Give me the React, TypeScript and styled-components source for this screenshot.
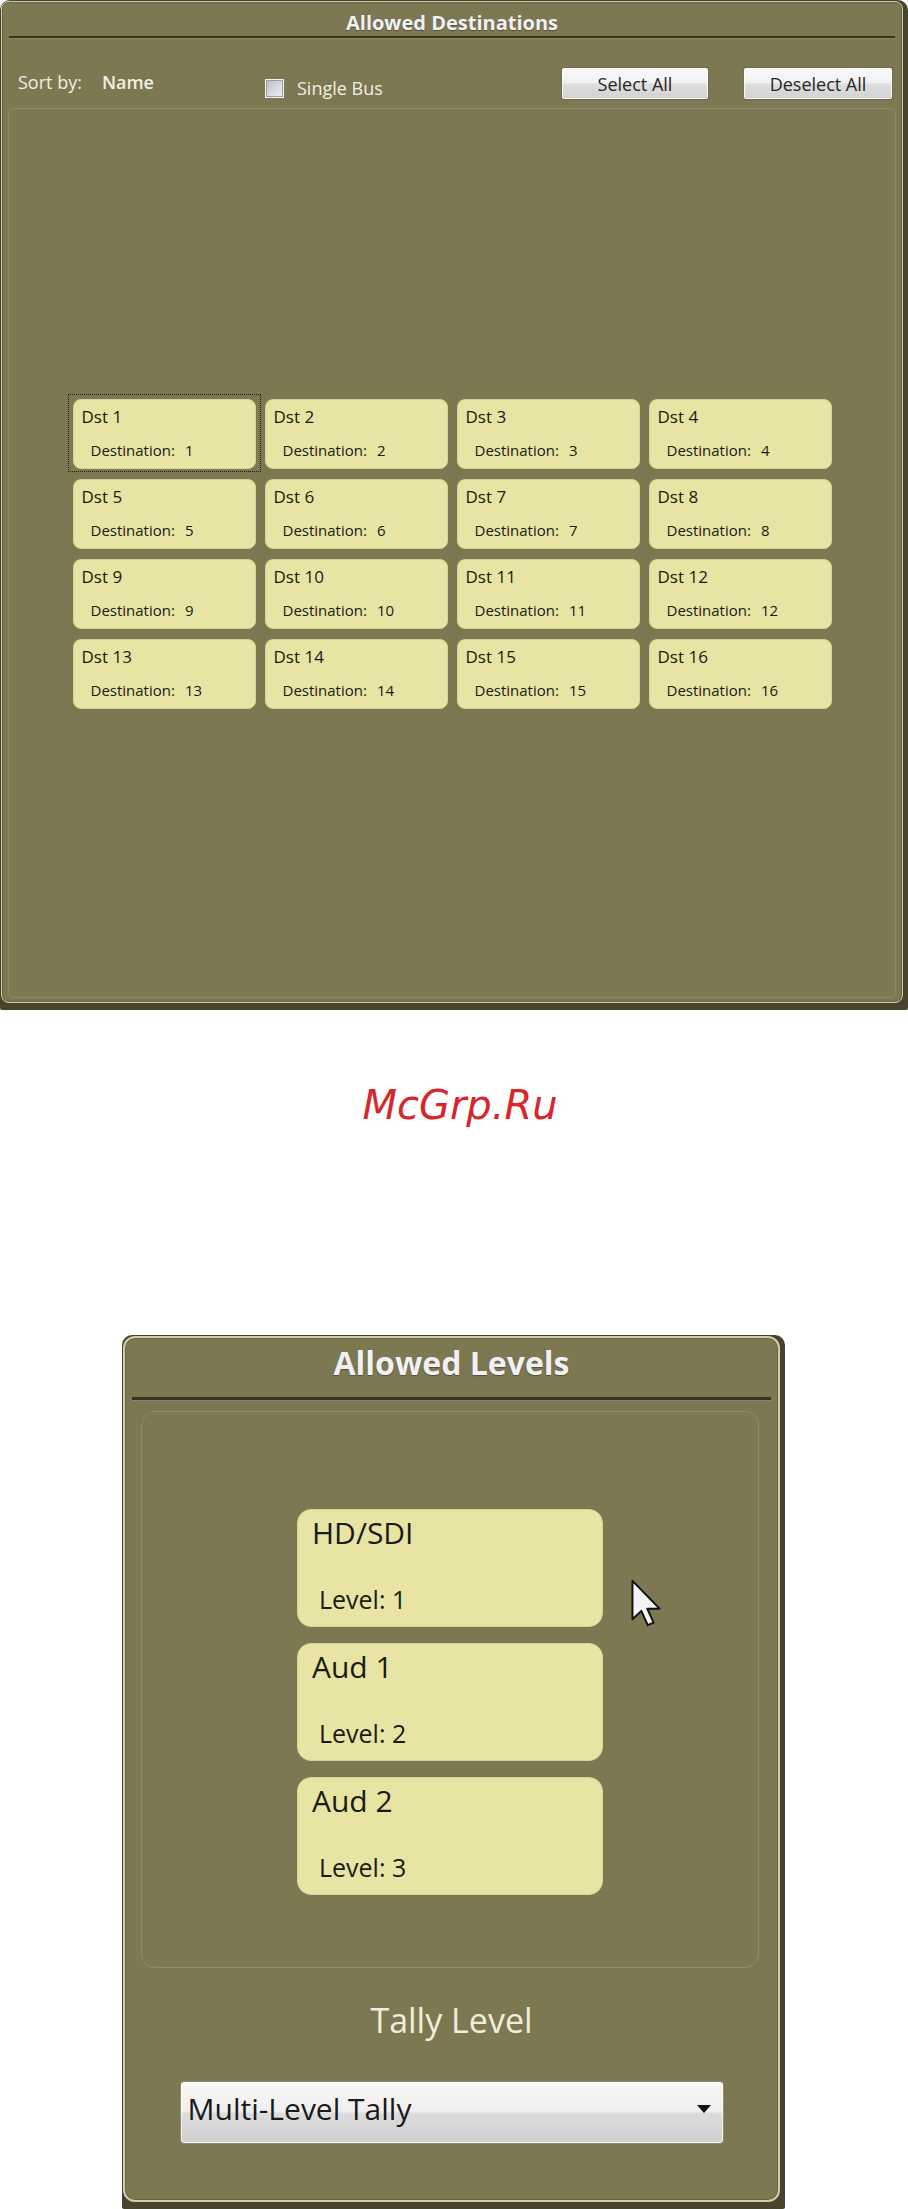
import styled, { createGlobalStyle } from 'styled-components';

const GlobalStyle = createGlobalStyle`
  html, body {
    margin: 0;
    padding: 0;
    background: #ffffff;
  }
  body {
    font-family: 'Open Sans', 'Noto Sans', sans-serif;
  }
  * {
    box-sizing: border-box;
  }
`;

const Page = styled.div`
  width: 908px;
  display: flex;
  flex-direction: column;
`;

// dark window backdrop that peeks out on the right and bottom of a panel
const Frame = styled.div<{ $left: number; $top: number; $width: number; $height: number }>`
  margin-left: ${(p) => p.$left}px;
  margin-top: ${(p) => p.$top}px;
  width: ${(p) => p.$width}px;
  height: ${(p) => p.$height}px;
  padding: 1px 5px 7px 1px;
  background: #47442e;
  border-radius: 10px 10px 2px 2px;
`;

const Panel = styled.div<{ $border: number; $radius: number }>`
  position: relative;
  height: 100%;
  display: flex;
  flex-direction: column;
  background: #7b7852;
  border: ${(p) => p.$border}px solid #cfcbb0;
  border-radius: ${(p) => p.$radius}px;
  box-shadow: inset 0 0 0 1px #6a673f;
`;

const PanelTitle = styled.h2<{ $size: number; $pad: number }>`
  margin: 0;
  padding-top: ${(p) => p.$pad}px;
  font-size: ${(p) => p.$size}px;
  line-height: ${(p) => Math.round(p.$size * 1.28)}px;
  font-weight: 700;
  text-align: center;
  color: #f1f0f4;
  text-shadow: 0 1px 1px rgba(0, 0, 0, 0.35);
`;

const TitleRule = styled.div<{ $thick: number; $gap: number }>`
  margin: ${(p) => p.$gap}px 7px 0;
  height: ${(p) => p.$thick}px;
  background: #35331f;
  box-shadow: 0 1px 0 rgba(255, 255, 255, 0.12);
`;

const Toolbar = styled.div`
  display: grid;
  grid-template-columns: 247px auto 1fr;
  align-items: start;
  height: 68px;
  padding: 0 9px 0 16px;
  color: #f1efe2;
  font-size: 18px;
  line-height: 24px;
`;

const SortGroup = styled.div`
  display: flex;
  gap: 20px;
  margin-top: 32px;
`;

const SortValue = styled.span`
  font-weight: 600;
`;

const CheckGroup = styled.label`
  display: flex;
  align-items: center;
  gap: 13px;
  margin-top: 38px;
`;

const CheckBox = styled.span`
  width: 19px;
  height: 19px;
  border: 1px solid #f2f2f2;
  background: linear-gradient(135deg, #b9b9c2 0%, #dcdce4 60%, #eeeef2 100%);
  box-shadow: inset 0 0 0 1px #9c9ca4;
`;

const ButtonGroup = styled.div`
  justify-self: end;
  display: flex;
  gap: 34px;
  margin-top: 29px;
`;

const ToolButton = styled.button<{ $width: number }>`
  width: ${(p) => p.$width}px;
  height: 33px;
  padding: 0;
  border: 1px solid #6f6c50;
  border-radius: 3px;
  background: linear-gradient(#fbfbfb 0%, #f0f0f0 48%, #dedede 52%, #d2d2d2 100%);
  box-shadow: inset 0 0 0 1px rgba(255, 255, 255, 0.8);
  font-family: inherit;
  font-size: 18px;
  color: #262626;
`;

const InnerPanel = styled.div`
  position: relative;
  flex: 1;
  margin: 2px 6px 4px;
  display: flex;
  align-items: center;
  justify-content: center;
  padding-top: 2px;
  border: 1px solid #8d8a67;
  border-radius: 6px;
`;

const DstGrid = styled.div`
  display: grid;
  grid-template-columns: repeat(4, 183px);
  grid-auto-rows: 70px;
  column-gap: 9px;
  row-gap: 10px;
`;

const DstCard = styled.div<{ $focused?: boolean }>`
  position: relative;
  display: flex;
  flex-direction: column;
  justify-content: space-between;
  padding: 6px 8px 8px;
  background: #e7e4a4;
  border: 1px solid #d7d49a;
  border-radius: 8px;
  color: #1b1b14;

  /* keyboard focus rectangle */
  &::after {
    content: '';
    display: ${(p) => (p.$focused ? 'block' : 'none')};
    position: absolute;
    inset: -6px -6px -4px -6px;
    border: 1px dotted #1c1c12;
    pointer-events: none;
  }
`;

const DstName = styled.div`
  font-size: 17px;
  line-height: 22px;
`;

const DstDetail = styled.div`
  padding-left: 9px;
  font-size: 15px;
  line-height: 20px;
`;

const DetailValue = styled.span`
  margin-left: 10px;
`;

const Watermark = styled.div`
  margin-top: 71px;
  padding-left: 12px;
  text-align: center;
  font-family: 'DejaVu Sans', sans-serif;
  font-style: italic;
  font-size: 40px;
  line-height: 48px;
  color: #d9262b;
`;

const LevelsPanel = styled.div`
  position: relative;
  height: 557px;
  margin: 11px 19px 0 16px;
  display: flex;
  flex-direction: column;
  align-items: center;
  gap: 16px;
  padding-top: 97px;
  border: 1px solid #8d8a67;
  border-radius: 14px;
`;

const LevelCard = styled.div`
  width: 306px;
  height: 118px;
  display: flex;
  flex-direction: column;
  justify-content: space-between;
  padding: 4px 14px 11px;
  background: #e7e4a4;
  border: 1px solid #d7d49a;
  border-radius: 14px;
  color: #1b1b14;
`;

const LevelName = styled.div`
  font-size: 30px;
  line-height: 38px;
`;

const LevelDetail = styled.div`
  padding-left: 7px;
  font-size: 25px;
  line-height: 32px;
`;

const Pointer = styled.svg`
  position: absolute;
  left: 488px;
  top: 166px;
`;

const TallyLabel = styled.div`
  margin-top: 30px;
  text-align: center;
  font-size: 34px;
  line-height: 44px;
  color: #f0eedb;
`;

const Dropdown = styled.div`
  align-self: center;
  width: 544px;
  height: 63px;
  margin-top: 39px;
  display: flex;
  align-items: center;
  justify-content: space-between;
  padding: 0 11px 8px 7px;
  border: 1px solid #8f8c74;
  border-radius: 4px;
  background: linear-gradient(#f7f7f7 0%, #efefef 48%, #dcdcdc 52%, #d0d0d0 100%);
  box-shadow: inset 0 0 0 1px rgba(255, 255, 255, 0.7);
  font-size: 30px;
  line-height: 38px;
  color: #1a1a1a;
`;

const destinations = Array.from({ length: 16 }, (_, i) => i + 1);

const levels = [
  { name: 'HD/SDI', level: 1 },
  { name: 'Aud 1', level: 2 },
  { name: 'Aud 2', level: 3 },
];

const App = () => {
  return (
    <Page>
      <GlobalStyle />
      <Frame $left={0} $top={0} $width={908} $height={1010}>
        <Panel $border={1} $radius={8}>
          <PanelTitle $size={20} $pad={8}>
            Allowed Destinations
          </PanelTitle>
          <TitleRule $thick={2} $gap={0} />
          <Toolbar>
            <SortGroup>
              <span>Sort by:</span>
              <SortValue>Name</SortValue>
            </SortGroup>
            <CheckGroup>
              <CheckBox />
              <span>Single Bus</span>
            </CheckGroup>
            <ButtonGroup>
              <ToolButton $width={148}>Select All</ToolButton>
              <ToolButton $width={150}>Deselect All</ToolButton>
            </ButtonGroup>
          </Toolbar>
          <InnerPanel>
            <DstGrid>
              {destinations.map((n) => (
                <DstCard key={n} $focused={n === 1}>
                  <DstName>Dst {n}</DstName>
                  <DstDetail>
                    Destination:<DetailValue>{n}</DetailValue>
                  </DstDetail>
                </DstCard>
              ))}
            </DstGrid>
          </InnerPanel>
        </Panel>
      </Frame>

      <Watermark>McGrp.Ru</Watermark>

      <Frame $left={122} $top={206} $width={663} $height={874}>
        <Panel $border={2} $radius={12}>
          <PanelTitle $size={32} $pad={4}>
            Allowed Levels
          </PanelTitle>
          <TitleRule $thick={3} $gap={14} />
          <LevelsPanel>
            {levels.map((l) => (
              <LevelCard key={l.name}>
                <LevelName>{l.name}</LevelName>
                <LevelDetail>Level: {l.level}</LevelDetail>
              </LevelCard>
            ))}
            <Pointer width="32" height="50" viewBox="0 0 13 20">
              <path
                d="M1 1 L1 16.6 L4.6 13.2 L7.2 19 L9.6 18 L7 12.3 L12 12.3 Z"
                fill="#f4f4f6"
                stroke="#111"
                strokeWidth="0.8"
                strokeLinejoin="round"
              />
            </Pointer>
          </LevelsPanel>
          <TallyLabel>Tally Level</TallyLabel>
          <Dropdown>
            <span>Multi-Level Tally</span>
            <svg width="16" height="10" viewBox="0 0 16 10">
              <path d="M1 1 L15 1 L8 9 Z" fill="#111" />
            </svg>
          </Dropdown>
        </Panel>
      </Frame>
    </Page>
  );
};

export default App;
